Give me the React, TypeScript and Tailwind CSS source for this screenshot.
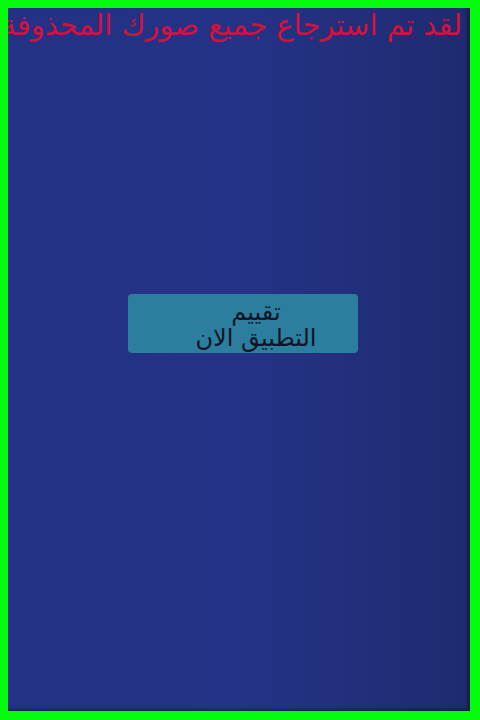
import React from 'react';

const App = () => {
  return (
    <div className="w-[480px] h-[720px] bg-[#05fc0f] pt-2 pl-2 pr-[10px] pb-[9px]">
      <div
        className="h-full w-full flex flex-col bg-gradient-to-r from-[#243185] via-[#243387] to-[#1f2b70] shadow-[inset_-3px_-2px_3px_rgba(0,0,0,0.35)] overflow-hidden"
        style={{ fontFamily: '"DejaVu Sans", "Noto Sans", sans-serif' }}
      >
        <div dir="rtl" className="pr-2 whitespace-nowrap overflow-hidden text-[29px] leading-[34px] text-[#d5103c]">
          لقد تم استرجاع جميع صورك المحذوفة
        </div>

        <div className="mt-[252px] ml-[120px]">
          <button
            dir="rtl"
            className="w-[230px] h-[59px] pl-[26px] pt-[2px] rounded-[4px] bg-[#2b7e9d] flex flex-col items-center justify-center text-[24px] leading-[26px] text-[#0d1526]"
          >
            <span>تقييم</span>
            <span>التطبيق الان</span>
          </button>
        </div>
      </div>
    </div>
  );
};

export default App;
